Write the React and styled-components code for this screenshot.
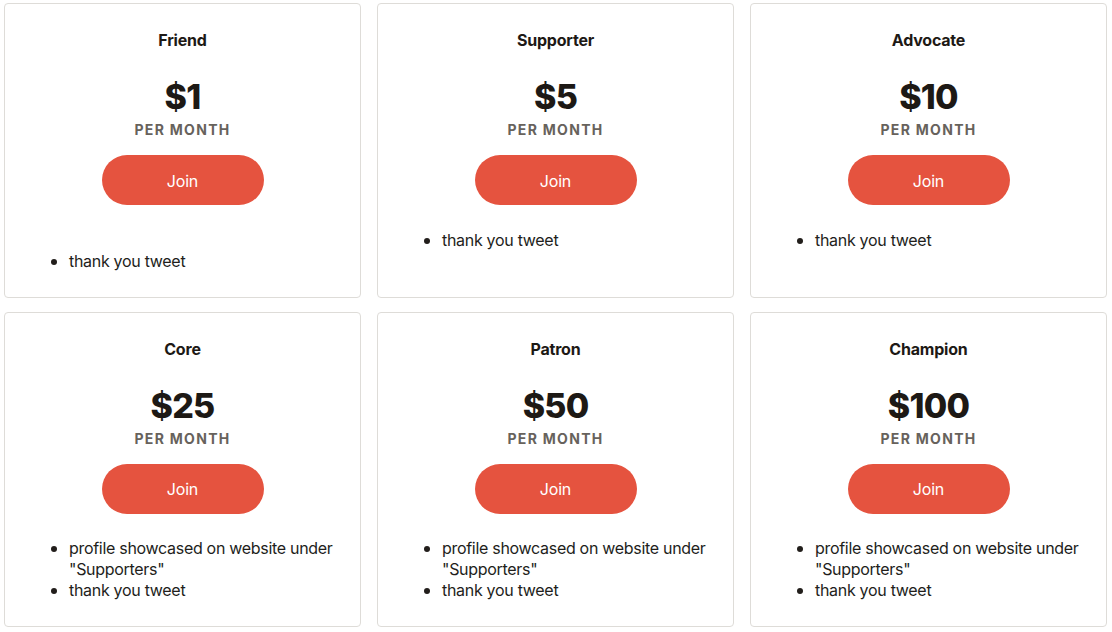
import React from "react";
import styled, { createGlobalStyle } from "styled-components";

const GlobalStyle = createGlobalStyle`
  html, body {
    margin: 0;
    padding: 0;
    background: #ffffff;
  }
  body {
    font-family: Inter, "Noto Sans", "Liberation Sans", sans-serif;
    color: #1f1b18;
  }
`;

const tiers = [
  { name: "Friend", price: 1, perks: ["thank you tweet"], note: true },
  { name: "Supporter", price: 5, perks: ["thank you tweet"] },
  { name: "Advocate", price: 10, perks: ["thank you tweet"] },
  {
    name: "Core",
    price: 25,
    perks: ['profile showcased on website under "Supporters"', "thank you tweet"],
  },
  {
    name: "Patron",
    price: 50,
    perks: ['profile showcased on website under "Supporters"', "thank you tweet"],
  },
  {
    name: "Champion",
    price: 100,
    perks: ['profile showcased on website under "Supporters"', "thank you tweet"],
  },
];

const App = () => {
  return (
    <>
      <GlobalStyle />
      <TierGrid>
        {tiers.map((tier) => (
          <TierCard key={tier.name}>
            <TierName>{tier.name}</TierName>
            <Price>${tier.price}</Price>
            <Period>PER MONTH</Period>
            <JoinButton type="button">Join</JoinButton>
            <PerkList $offset={tier.note}>
              {tier.perks.map((perk) => (
                <Perk key={perk}>{perk}</Perk>
              ))}
            </PerkList>
          </TierCard>
        ))}
      </TierGrid>
    </>
  );
};

const TierGrid = styled.div`
  display: grid;
  grid-template-columns: repeat(3, 357px);
  column-gap: 16px;
  row-gap: 14px;
  padding: 3px 5px 4px 4px;
  align-items: start;
`;

const TierCard = styled.div`
  display: flex;
  flex-direction: column;
  align-items: center;
  box-sizing: border-box;
  height: 100%;
  border: 1px solid #dedcd8;
  border-radius: 4px;
  padding: 26px 24px 25px;
  background: #ffffff;
`;

const TierName = styled.div`
  font-size: 16px;
  line-height: 20px;
  font-weight: 700;
  letter-spacing: -0.2px;
  color: #1d1915;
`;

const Price = styled.div`
  margin-top: 27px;
  font-size: 34px;
  line-height: 40px;
  font-weight: 800;
  letter-spacing: -0.8px;
  color: #1d1915;
`;

const Period = styled.div`
  margin-top: 4px;
  font-size: 14px;
  line-height: 18px;
  font-weight: 700;
  letter-spacing: 1.3px;
  color: #67625c;
`;

const JoinButton = styled.button`
  margin-top: 16px;
  width: 162px;
  height: 50px;
  padding-top: 2px;
  border: none;
  border-radius: 25px;
  background: #e5533f;
  color: #ffffff;
  font-family: inherit;
  font-size: 16px;
  font-weight: 400;
  letter-spacing: -0.2px;
  cursor: pointer;
`;

const PerkList = styled.ul`
  align-self: stretch;
  margin: ${(p) => (p.$offset ? "45.5px" : "24.5px")} -4px 0 0;
  padding-left: 40px;
  list-style: none;
  font-size: 16px;
  line-height: 21px;
  letter-spacing: -0.3px;
  color: #221e1b;
`;

const Perk = styled.li`
  position: relative;

  &::before {
    content: "";
    position: absolute;
    left: -18px;
    top: 8px;
    width: 6px;
    height: 6px;
    border-radius: 50%;
    background: currentColor;
  }
`;

export default App;
